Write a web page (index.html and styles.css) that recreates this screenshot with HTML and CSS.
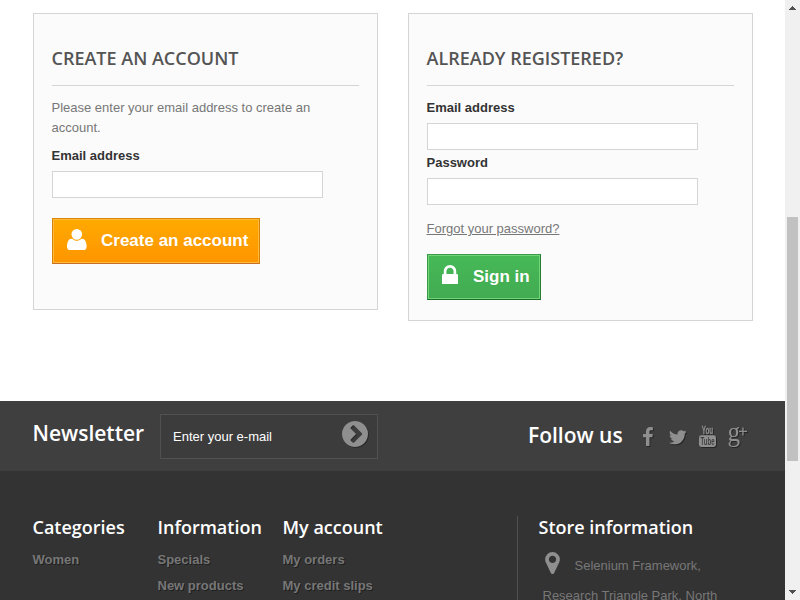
FILE: index.html
```html
<!DOCTYPE html>
<html lang="en">
<head>
<meta charset="utf-8">
<title>Login</title>
<link rel="stylesheet" href="styles.css">
</head>
<body>
<div class="page">
  <main class="forms">
    <form class="box create">
      <h3>Create an account</h3>
      <p>Please enter your email address to create an account.</p>
      <label for="new">Email address</label>
      <input id="new" type="text">
      <button type="button" class="btn orange"><svg class="user" viewBox="0 0 1408 1536"><path transform="matrix(1 0 0 -1 0 1408)" d="M1408 131q0 -120 -73 -189.5t-194 -69.5h-874q-121 0 -194 69.5t-73 189.5q0 53 3.5 103.5t14 109t26.5 108.5t43 97.5t62 81t85.5 53.5t111.5 20q9 0 42 -21.5t74.5 -48t108 -48t133.5 -21.5t133.5 21.5t108 48t74.5 48t42 21.5q61 0 111.5 -20t85.5 -53.5t62 -81t43 -97.5t26.5 -108.5t14 -109t3.5 -103.5zM1088 1024q0 -159 -112.5 -271.5t-271.5 -112.5t-271.5 112.5t-112.5 271.5t112.5 271.5t271.5 112.5t271.5 -112.5t112.5 -271.5z"/></svg><span>Create an account</span></button>
    </form>
    <form class="box login">
      <h3>Already registered?</h3>
      <label for="mail">Email address</label>
      <input id="mail" type="text">
      <label for="pass">Password</label>
      <input id="pass" type="password">
      <a class="forgot" href="#">Forgot your password?</a>
      <button type="button" class="btn green"><svg class="lock" viewBox="320 128 1152 1408"><path d="M640 768h512v-192q0-106-75-181t-181-75-181 75-75 181v192zm832 96v576q0 40-28 68t-68 28h-960q-40 0-68-28t-28-68v-576q0-40 28-68t68-28h32v-192q0-184 132-316t316-132 316 132 132 316v192h32q40 0 68 28t28 68z"/></svg><span>Sign in</span></button>
    </form>
  </main>
  <footer>
    <div class="band">
      <h4 class="news">Newsletter</h4>
      <div class="field"><span>Enter your e-mail</span><svg class="go" viewBox="128 128 1536 1536"><path d="M845 1395l454-454q19-19 19-45t-19-45l-454-454q-19-19-45-19t-45 19l-102 102q-19 19-19 45t19 45l307 307-307 307q-19 19-19 45t19 45l102 102q19 19 45 19t45-19zm819-499q0 209-103 385.5t-279.5 279.5-385.5 103-385.5-103-279.5-279.5-103-385.5 103-385.5 279.5-279.5 385.5-103 385.5 103 279.5 279.5 103 385.5z"/></svg></div>
      <h4 class="follow">Follow us</h4>
      <div class="social">
        <svg class="fb" viewBox="479 0 864 1664"><path d="M1343 12v264h-157q-86 0-116 36t-30 108v189h293l-39 296h-254v759h-306v-759h-255v-296h255v-218q0-186 104-288.5t277-102.5q147 0 228 12z"/></svg>
        <svg class="tw" viewBox="108 256 1576 1280"><path d="M1684 408q-67 98-162 167 1 14 1 42 0 130-38 259.5t-115.5 248.5-184.5 210.5-258 146-323 54.5q-271 0-496-145 35 4 78 4 225 0 401-138-105-2-188-64.5t-114-159.5q33 5 61 5 43 0 85-11-112-23-185.5-111.5t-73.5-205.5v-4q68 38 146 41-66-44-105-115t-39-154q0-88 44-163 121 149 294.5 238.5t371.5 99.5q-8-38-8-74 0-134 94.5-228.5t228.5-94.5q140 0 236 102 109-21 205-78-37 115-142 178 93-10 186-50z"/></svg>
        <svg class="yt" viewBox="0 0 17 20"><text class="you" x="2.8" y="7.2" font-size="10" textLength="11.4" lengthAdjust="spacingAndGlyphs">You</text><rect y="8.3" width="17" height="11.7" rx="2.4"/><text class="cut" x="1.5" y="17.9" font-size="11" textLength="14" lengthAdjust="spacingAndGlyphs">Tube</text></svg>
        <svg class="gp" viewBox="0 0 19 20"><text x="-.4" y="13.8" font-size="28" textLength="12.6" lengthAdjust="spacingAndGlyphs">g</text><path d="M14.3.5h1.3v3.3H19v1.3h-3.4v3.5h-1.3V5.1H11V3.8h3.3z"/></svg>
      </div>
    </div>
    <div class="columns">
      <section><h4>Categories</h4><a href="#">Women</a></section>
      <section><h4>Information</h4><a href="#">Specials</a><a href="#">New products</a></section>
      <section class="account"><h4>My account</h4><a href="#">My orders</a><a href="#">My credit slips</a></section>
      <section class="store"><h4>Store information</h4>
        <p><svg class="pin" viewBox="384 128 1024 1536"><path d="M1152 640q0-106-75-181t-181-75-181 75-75 181 75 181 181 75 181-75 75-181zm256 0q0 109-33 179l-364 774q-16 33-47.5 52t-67.5 19-67.5-19-46.5-52l-365-774q-33-70-33-179 0-212 150-362t362-150 362 150 150 362z"/></svg><span>Selenium Framework,</span></p>
        <p class="second">Research Triangle Park, North</p>
      </section>
    </div>
  </footer>
</div>
<div class="scrollbar"><svg viewBox="0 0 7 4"><path d="M3 0h1v1h1v1h1v1h1v1H0V3h1V2h1V1h1z"/></svg><div class="thumb"></div><svg viewBox="0 0 7 4"><path d="M0 0h7v1H6v1H5v1H4v1H3V3H2V2H1V1H0z"/></svg></div>
</body>
</html>
```
FILE: styles.css
```css
* { box-sizing: border-box; }
body { margin: 0; height: 600px; overflow: hidden; display: flex; font: 13px/20px "Liberation Sans", Arial, sans-serif; color: #777; background: #fff; }
h3, h4, p { margin: 0; }
h3, h4 { font-family: "Open Sans", sans-serif; font-weight: 600; }
svg { display: block; flex: none; fill: currentColor; }
.page { width: 785px; height: 600px; overflow: hidden; }
.forms { height: 401px; padding: 13px 32.5px 0; display: flex; gap: 30px; align-items: flex-start; }
.box { width: 345px; padding: 33px 18px 0; border: 1px solid #d6d4d4; background: #fbfbfb; }
.create { height: 297px; }
.login { height: 308px; }
h3 { height: 39px; margin-bottom: 12px; border-bottom: 1px solid #d6d4d4; font-size: 18px; line-height: 22px; color: #555454; text-transform: uppercase; white-space: nowrap; }
.create p { margin-bottom: 8px; }
label { display: block; height: 20px; margin-bottom: 5px; font-weight: bold; color: #333; }
input { display: block; width: 271px; height: 27px; margin: 0; padding: 4px; border: 1px solid #d6d4d4; background: #fff; }
.login label { height: 19px; margin-bottom: 0; }
.login input { margin: 6px 0 3px; }
.forgot { display: block; margin-top: 14px; color: #777; text-decoration: underline; }
.btn { display: flex; align-items: flex-start; height: 46px; padding: 0 0 0 14px; border: 1px solid; color: #fff; font: bold 17px/21px "Liberation Sans", Arial, sans-serif; text-shadow: 1px 1px rgba(0,0,0,.05); white-space: nowrap; }
.btn span { margin-top: 11px; }
.orange { width: 208px; margin-top: 20px; border-color: #db8600 #d98305 #c86d26 #d98305; background: linear-gradient(#ffaa00, #ff9500); box-shadow: inset 0 0 0 1px #ffb93c; }
.green { width: 114px; margin-top: 15px; border-color: #399a49 #247f32 #1a6d27 #399a49; background: linear-gradient(#46b956, #42ab52); box-shadow: inset 0 0 0 1px #74d578; }
.user { width: 19.6px; height: 21.4px; margin: 10px 14.4px 0 .5px; }
.lock { width: 16px; height: 19.6px; margin: 9.5px 15px 0 .5px; }
footer { height: 199px; background: #333; }
.band { display: flex; height: 70px; padding-left: 32.5px; background: #3f3f3f; color: #fff; }
.band h4 { font-size: 21px; line-height: 25px; white-space: nowrap; }
.news { width: 127.5px; padding-top: 20px; }
.field { display: flex; justify-content: space-between; width: 218px; height: 45px; margin-top: 13px; padding: 6px 9px 0 12px; border: 1px solid #515151; background: #3c3c3c; }
.field span { margin-top: 6px; }
.go { width: 26px; height: 26px; color: #908f8f; filter: drop-shadow(1px 1px 0 rgba(0,0,0,.3)); }
.follow { width: 115px; margin-left: 150px; padding-top: 22px; }
.social { display: flex; align-items: flex-start; padding-top: 26px; color: #908f8f; }
.social svg { filter: drop-shadow(1px 1px 0 rgba(0,0,0,.4)); overflow: visible; }
.fb { width: 10px; height: 19px; margin: 0 16px 0 -.5px; }
.tw { width: 17.5px; height: 14.5px; margin: 2.5px 12.5px 0 0; }
.yt { width: 17px; height: 20px; margin-right: 12px; font-family: "Liberation Sans", sans-serif; font-weight: bold; }
.you { stroke: currentColor; stroke-width: .3px; }
.cut { fill: #3f3f3f; }
.gp { width: 19px; height: 20px; font-family: "Liberation Serif", serif; }
.columns { display: flex; padding: 45px 0 0 32.5px; }
section { width: 125px; height: 84px; }
.columns h4 { height: 34px; font-size: 18px; line-height: 22px; color: #fff; white-space: nowrap; }
.columns a { display: block; height: 26px; font-weight: bold; color: #777; text-decoration: none; text-shadow: 1px 1px 0 rgba(0,0,0,.4); white-space: nowrap; }
.account { width: 234.5px; }
.store { width: 240px; padding-left: 20.5px; border-left: 1px solid #515151; }
.columns .store h4 { height: 31px; }
.store p { display: flex; height: 33px; padding-left: 6px; color: #777; white-space: nowrap; }
.store span { margin-top: 9px; }
.pin { width: 15px; height: 22px; margin: 5px 15px 0 0; color: #908f8f; }
.store .second { padding: 6px 0 0 4px; }
.scrollbar { width: 15px; height: 600px; padding: 6px 0 0 2px; background: #f0f0f0; color: #505050; }
.scrollbar svg { width: 7px; height: 4px; margin-left: 2px; }
.thumb { width: 11px; height: 244px; margin: 207px 0 129px; background: #c1c1c1; }
```
